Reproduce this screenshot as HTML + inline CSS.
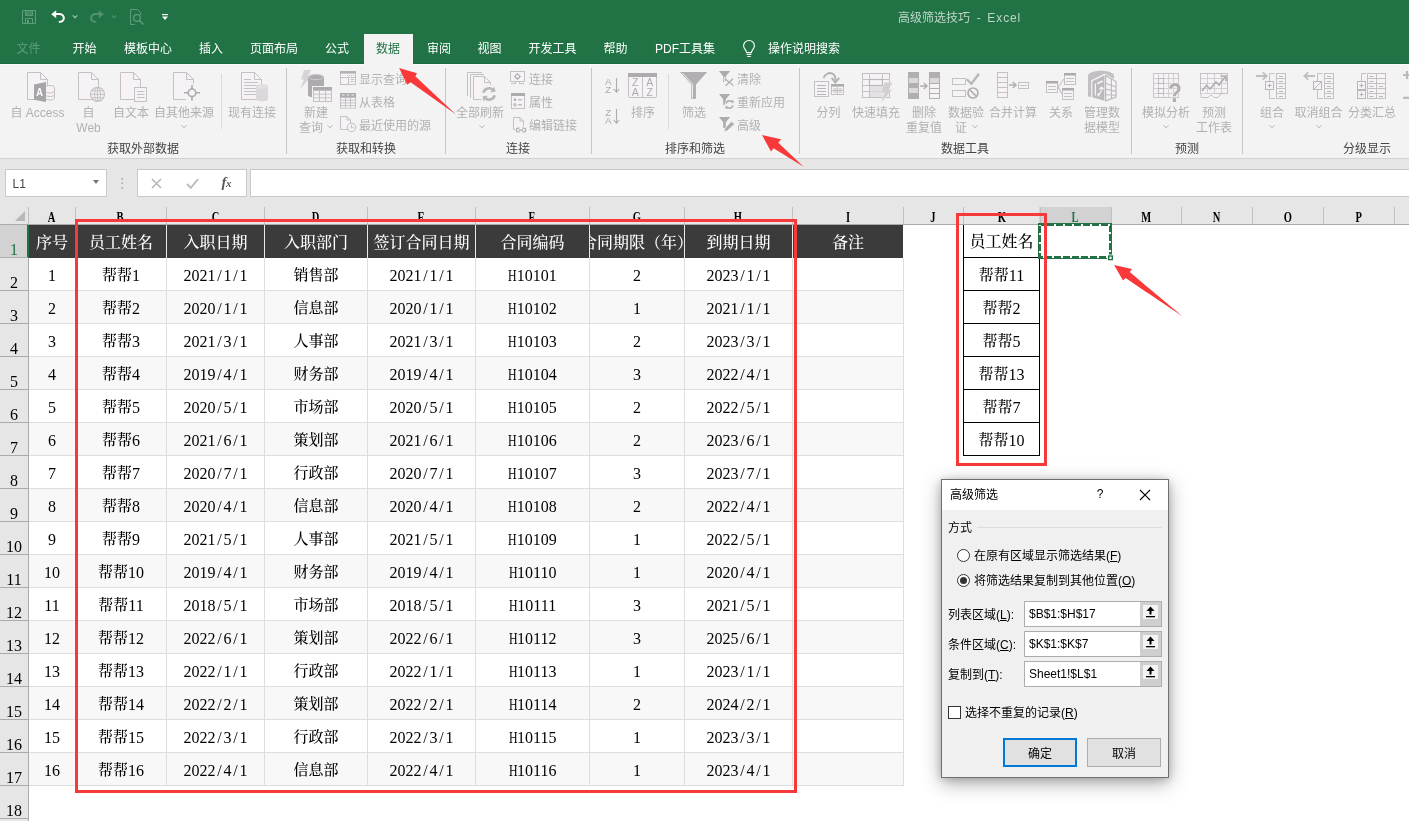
<!DOCTYPE html><html lang="zh-CN"><head><meta charset="utf-8"><title>高级筛选技巧 - Excel</title><style>
*{box-sizing:border-box;margin:0;padding:0}
html,body{width:1409px;height:821px;overflow:hidden;background:#fff}
body{position:relative;font-family:"Liberation Sans","Noto Sans CJK SC",sans-serif;font-size:12px;color:#444}
#root{position:absolute;left:0;top:0;width:1409px;height:821px;overflow:hidden;will-change:transform}
.abs{position:absolute}
#green{left:0;top:0;width:1409px;height:64px;background:#217346}
.tab{position:absolute;top:40px;height:18px;line-height:18px;font-size:12px;color:#fff;white-space:nowrap}
#ribbon{left:0;top:64px;width:1409px;height:94px;background:#f3f3f3}
#ribline{left:0;top:158px;width:1409px;height:1px;background:#d2d2d2}
#fbar{left:0;top:159px;width:1409px;height:48px;background:#e6e6e6}
.lbl{position:absolute;font-size:12px;line-height:15px;color:#b1b1b1;text-align:center;white-space:nowrap;transform:translateX(-50%)}
.sl{position:absolute;font-size:12px;line-height:16px;color:#b1b1b1;white-space:nowrap}
.gl{position:absolute;top:141px;font-size:12px;line-height:16px;color:#444;white-space:nowrap;transform:translateX(-50%)}
.gsep{position:absolute;top:68px;width:1px;height:86px;background:#c6c6c6}
.isep{position:absolute;top:74px;width:1px;height:55px;background:#dadada}
.ico{position:absolute}
.cell{position:absolute;font-weight:500;display:flex;justify-content:center;font-family:"Liberation Serif","Noto Serif CJK SC",serif;font-size:15px;color:#000;text-align:center;white-space:nowrap;overflow:hidden}
.in{flex:none;white-space:nowrap}
.m{font-family:"Liberation Serif",serif;font-size:16px;letter-spacing:0;position:relative;top:1px}
.hh{display:inline-block;width:8.5px;transform:scaleX(.74);transform-origin:0 50%}
.s{display:inline-block;width:8px;text-align:center;letter-spacing:0}
.hd{color:#fff;font-size:16px}
.ch{position:absolute;top:207px;height:17px;font-family:"Liberation Serif","Noto Serif CJK SC",serif;font-size:15px;color:#000;text-align:center;line-height:21px;overflow:hidden}
.rh{position:absolute;left:0;width:28px;font-family:"Liberation Serif","Noto Serif CJK SC",serif;font-size:16px;color:#000;text-align:center}
.dlg{font-family:"Liberation Sans","Noto Sans CJK SC",sans-serif;font-size:12px;color:#000}
u{text-decoration:underline}
</style></head><body><div id="root">
<div class="abs" id="green"></div>
<div class="abs" style="left:364px;top:34px;width:49px;height:30px;background:#f3f3f3"></div>
<div class="abs" style="left:898px;top:10px;height:16px;line-height:16px;font-size:12px;color:#bdd6c8;white-space:pre">高级筛选技巧  -  <span style="letter-spacing:.9px">Excel</span></div>
<div class="tab" style="left:16.5px;color:#5f9c7b">文件</div>
<div class="tab" style="left:72.5px;color:#fff">开始</div>
<div class="tab" style="left:124px;color:#fff">模板中心</div>
<div class="tab" style="left:199px;color:#fff">插入</div>
<div class="tab" style="left:250px;color:#fff">页面布局</div>
<div class="tab" style="left:325px;color:#fff">公式</div>
<div class="tab" style="left:376px;color:#217346">数据</div>
<div class="tab" style="left:427px;color:#fff">审阅</div>
<div class="tab" style="left:477.5px;color:#fff">视图</div>
<div class="tab" style="left:528.5px;color:#fff">开发工具</div>
<div class="tab" style="left:603.5px;color:#fff">帮助</div>
<div class="tab" style="left:655px;color:#fff">PDF工具集</div>
<div class="tab" style="left:768px;color:#fff">操作说明搜索</div>
<div class="abs" style="left:0;top:63px;width:1409px;height:1px;background:#1c6a3f"></div>
<div class="abs" id="ribbon"></div><div class="abs" style="left:0;top:64px;width:1409px;height:1px;background:#fbfafb"></div><div class="abs" style="left:364px;top:63px;width:49px;height:2px;background:#f3f3f3"></div><div class="abs" id="ribline"></div><div class="abs" id="fbar"></div>
<div class="lbl" style="left:37.5px;top:106px">自 Access</div>
<div class="lbl" style="left:88.5px;top:106px">自<br>Web</div>
<div class="lbl" style="left:131px;top:106px">自文本</div>
<div class="lbl" style="left:184px;top:106px">自其他来源</div>
<div class="lbl" style="left:252px;top:106px">现有连接</div>
<div class="lbl" style="left:316px;top:106px">新建<br>查询&nbsp;&nbsp;&nbsp;</div>
<div class="lbl" style="left:480px;top:106px">全部刷新</div>
<div class="lbl" style="left:643px;top:106px">排序</div>
<div class="lbl" style="left:694px;top:106px">筛选</div>
<div class="lbl" style="left:828.5px;top:106px">分列</div>
<div class="lbl" style="left:876px;top:106px">快速填充</div>
<div class="lbl" style="left:924px;top:106px">删除<br>重复值</div>
<div class="lbl" style="left:966px;top:106px">数据验<br>证&nbsp;&nbsp;&nbsp;</div>
<div class="lbl" style="left:1013px;top:106px">合并计算</div>
<div class="lbl" style="left:1061px;top:106px">关系</div>
<div class="lbl" style="left:1102px;top:106px">管理数<br>据模型</div>
<div class="lbl" style="left:1166px;top:106px">模拟分析</div>
<div class="lbl" style="left:1214px;top:106px">预测<br>工作表</div>
<div class="lbl" style="left:1272px;top:106px">组合</div>
<div class="lbl" style="left:1318.5px;top:106px">取消组合</div>
<div class="lbl" style="left:1372px;top:106px">分类汇总</div>
<div class="sl" style="left:359px;top:72px">显示查询</div>
<div class="sl" style="left:359px;top:95px">从表格</div>
<div class="sl" style="left:359px;top:118px">最近使用的源</div>
<div class="sl" style="left:529px;top:72px">连接</div>
<div class="sl" style="left:529px;top:95px">属性</div>
<div class="sl" style="left:529px;top:118px">编辑链接</div>
<div class="sl" style="left:737px;top:72px">清除</div>
<div class="sl" style="left:737px;top:95px">重新应用</div>
<div class="sl" style="left:737px;top:118px">高级</div>
<div class="gl" style="left:143px">获取外部数据</div>
<div class="gl" style="left:366px">获取和转换</div>
<div class="gl" style="left:518px">连接</div>
<div class="gl" style="left:695px">排序和筛选</div>
<div class="gl" style="left:965px">数据工具</div>
<div class="gl" style="left:1187px">预测</div>
<div class="gl" style="left:1367px">分级显示</div>
<div class="gsep" style="left:286px"></div>
<div class="gsep" style="left:445px"></div>
<div class="gsep" style="left:591px"></div>
<div class="gsep" style="left:799px"></div>
<div class="gsep" style="left:1131px"></div>
<div class="gsep" style="left:1242px"></div>
<div class="isep" style="left:221px"></div>
<div class="isep" style="left:668px"></div>
<svg class="abs" style="left:22px;top:10px;overflow:visible" width="14" height="14" viewBox="0 0 14 14"><path d="M.5 .5H13.5V13.5H.5Z" fill="none" stroke="#5c9d7b"/><path d="M3.5 .5V5.5H10.5V.5" fill="#5c9d7b" fill-opacity=".55" stroke="#5c9d7b"/><path d="M3.5 13.5V8.5H10.5V13.5" fill="none" stroke="#5c9d7b"/><rect x="5" y="10" width="2" height="3" fill="#5c9d7b"/></svg>
<svg class="abs" style="left:50px;top:9px;overflow:visible" width="16" height="15" viewBox="0 0 16 15"><path d="M1.2 5.2L6.2 1.2V3.9H9C12.6 3.9 14.8 6 14.8 9C14.8 12 12.6 13.8 9.5 13.8H8.8V12H9.4C11.5 12 12.8 10.9 12.8 9C12.8 7.1 11.5 5.9 9 5.9H6.2V9.2Z" fill="#fff"/></svg>
<svg class="abs" style="left:71px;top:13.5px" width="8" height="6"><path d="M1.7000000000000002 1.35L4 3.65L6.3 1.35" stroke="#a6cbb6" stroke-width="1.1" fill="none"/></svg>
<svg class="abs" style="left:89px;top:9px;overflow:visible" width="16" height="15" viewBox="0 0 16 15"><path d="M14.8 5.2L9.8 1.2V3.9H7C3.4 3.9 1.2 6 1.2 9C1.2 12 3.4 13.8 6.5 13.8H7.2V12H6.6C4.5 12 3.2 10.9 3.2 9C3.2 7.1 4.5 5.9 7 5.9H9.8V9.2Z" fill="#4f9370"/></svg>
<svg class="abs" style="left:110px;top:13.5px" width="8" height="6"><path d="M1.7000000000000002 1.35L4 3.65L6.3 1.35" stroke="#4f9370" stroke-width="1.1" fill="none"/></svg>
<svg class="abs" style="left:129px;top:8px;overflow:visible" width="16" height="18" viewBox="0 0 16 18"><path d="M1.5 16.5V1.5H8.5L11.5 4.5V7" fill="none" stroke="#5c9d7b"/><path d="M1.5 16.5H6" fill="none" stroke="#5c9d7b"/><circle cx="8" cy="10" r="3.3" fill="none" stroke="#5c9d7b" stroke-width="1.3"/><path d="M10.5 12.5L14.5 16.5" stroke="#5c9d7b" stroke-width="1.6"/></svg>
<svg class="abs" style="left:161px;top:13px;overflow:visible" width="8" height="8" viewBox="0 0 8 8"><rect x="1" y="1" width="6" height="1.2" fill="#fff"/><path d="M1 3.6H7L4 7Z" fill="#fff"/></svg>
<svg class="abs" style="left:741px;top:39px;overflow:visible" width="16" height="20" viewBox="0 0 16 20"><path d="M8 1.5C4.8 1.5 2.6 3.9 2.6 6.8C2.6 8.8 3.7 10 4.7 11.3C5.3 12.1 5.5 12.8 5.5 13.6H10.5C10.5 12.8 10.7 12.1 11.3 11.3C12.3 10 13.4 8.8 13.4 6.8C13.4 3.9 11.2 1.5 8 1.5Z" fill="none" stroke="#fff" stroke-width="1.1"/><path d="M5.7 15.5H10.3M6.2 17.5H9.8" stroke="#fff" stroke-width="1.1"/></svg>
<svg class="abs" style="left:26px;top:70px;overflow:visible" width="30" height="33" viewBox="0 0 30 33"><path d="M1.5 2.5H14.5L21.5 9.5V29.5H1.5Z" fill="#f6f2f6" stroke="#c4c1c4" stroke-width="1"/><path d="M14.5 2.5V9.5H21.5" fill="none" stroke="#c4c1c4" stroke-width="1"/><path d="M19 17.5V28C19 29.2 21.5 30 24 30C26.5 30 28.5 29.2 28.5 28V17.5C28.5 16.3 26.5 15.5 24 15.5C21.5 15.5 19 16.3 19 17.5Z" fill="#f6f2f6" stroke="#c4c1c4"/><path d="M19 21C19 22.2 21.5 23 24 23C26.5 23 28.5 22.2 28.5 21M19 24.5C19 25.7 21.5 26.5 24 26.5C26.5 26.5 28.5 25.7 28.5 24.5" fill="none" stroke="#c4c1c4"/><path d="M8 14.5L20 12V32L8 29.8Z" fill="#a7a5a7"/><text transform="translate(13.6,26.2) scale(.85,1)" font-family="Liberation Sans,sans-serif" font-weight="bold" font-size="11" fill="#fff" text-anchor="middle">A</text></svg>
<svg class="abs" style="left:77px;top:70px;overflow:visible" width="30" height="33" viewBox="0 0 30 33"><path d="M1.5 2.5H14.5L21.5 9.5V29.5H1.5Z" fill="#f6f2f6" stroke="#c4c1c4" stroke-width="1"/><path d="M14.5 2.5V9.5H21.5" fill="none" stroke="#c4c1c4" stroke-width="1"/><circle cx="20.5" cy="24.3" r="7" fill="#f6f2f6" stroke="#c4c1c4" stroke-width="1.2"/><ellipse cx="20.5" cy="24.3" rx="3" ry="7" fill="none" stroke="#c4c1c4"/><path d="M20.5 17.3V31.3M13.5 24.3H27.5M14.5 20.8H26.5M14.5 27.8H26.5" stroke="#c4c1c4" fill="none"/></svg>
<svg class="abs" style="left:119px;top:70px;overflow:visible" width="30" height="33" viewBox="0 0 30 33"><path d="M1.5 2.5H14.5L21.5 9.5V29.5H1.5Z" fill="#f6f2f6" stroke="#c4c1c4" stroke-width="1"/><path d="M14.5 2.5V9.5H21.5" fill="none" stroke="#c4c1c4" stroke-width="1"/><rect x="15.5" y="17.5" width="12" height="14" fill="#f6f2f6" stroke="#c4c1c4" stroke-width="1"/><path d="M18 21.5H25.5M18 24.5H25.5M18 27.5H25.5" stroke="#c4c1c4" fill="none"/></svg>
<svg class="abs" style="left:172px;top:70px;overflow:visible" width="30" height="33" viewBox="0 0 30 33"><path d="M1.5 2.5H14.5L21.5 9.5V29.5H1.5Z" fill="#f6f2f6" stroke="#c4c1c4" stroke-width="1"/><path d="M14.5 2.5V9.5H21.5" fill="none" stroke="#c4c1c4" stroke-width="1"/><rect x="14" y="14" width="13" height="18" fill="#f3f3f3"/><circle cx="20" cy="22.8" r="3.8" fill="#f6f2f6" stroke="#adabad" stroke-width="1.6"/><path d="M20 15V19M20 26.6V30.8M12 22.8H16.2M23.8 22.8H28" stroke="#adabad" stroke-width="1.6" fill="none"/></svg>
<svg class="abs" style="left:240px;top:70px;overflow:visible" width="30" height="33" viewBox="0 0 30 33"><path d="M1.5 2.5H14.5L21.5 9.5V29.5H1.5Z" fill="#f6f2f6" stroke="#c4c1c4" stroke-width="1"/><path d="M14.5 2.5V9.5H21.5" fill="none" stroke="#c4c1c4" stroke-width="1"/><path d="M4 9.5H11M4 12.5H18M4 15.5H18M4 18.5H18M4 21.5H18M4 24.5H18" stroke="#c4c1c4" fill="none"/><path d="M16 16.5V29C16 30.3 18.8 31.3 22 31.3C25.2 31.3 28 30.3 28 29V16.5C28 15.2 25.2 14.2 22 14.2C18.8 14.2 16 15.2 16 16.5Z" fill="#dbd7db"/><ellipse cx="22" cy="16.5" rx="6" ry="2.3" fill="#e3dfe3"/></svg>
<svg class="abs" style="left:299px;top:69px;overflow:visible" width="34" height="34" viewBox="0 0 34 34"><path d="M5 1H12L8.6 8H11.6L1.2 20L5 10.5H2Z" fill="#d6d2d6"/><path d="M9 8V26C9 27.6 12.6 28.8 17 28.8C21.4 28.8 25 27.6 25 26V8Z" fill="#adabad"/><ellipse cx="17" cy="8" rx="7.5" ry="2.6" fill="#adabad" stroke="#cfcccf" stroke-width="1"/><rect x="13" y="17" width="21" height="17" fill="#f3f3f3"/><rect x="14" y="18" width="19" height="15" fill="#c4c1c4"/><rect x="14" y="18" width="19" height="3" fill="#adabad"/><rect x="15" y="22.00" width="5" height="2.67" fill="#f6f2f6"/><rect x="15" y="25.67" width="5" height="2.67" fill="#f6f2f6"/><rect x="15" y="29.34" width="5" height="2.67" fill="#f6f2f6"/><rect x="21" y="22.00" width="5" height="2.67" fill="#f6f2f6"/><rect x="21" y="25.67" width="5" height="2.67" fill="#f6f2f6"/><rect x="21" y="29.34" width="5" height="2.67" fill="#f6f2f6"/><rect x="27" y="22.00" width="5" height="2.67" fill="#f6f2f6"/><rect x="27" y="25.67" width="5" height="2.67" fill="#f6f2f6"/><rect x="27" y="29.34" width="5" height="2.67" fill="#f6f2f6"/></svg>
<svg class="abs" style="left:340px;top:71px;overflow:visible" width="16" height="14" viewBox="0 0 16 14"><rect x="0.5" y="0.5" width="15" height="13" fill="#f6f2f6" stroke="#c4c1c4" stroke-width="1"/><rect x="0" y="0" width="16" height="2.6" fill="#b4b1b4"/><rect x="7" y="4" width="1" height="1" fill="#bdbabd"/><rect x="9" y="4" width="1" height="1" fill="#bdbabd"/><rect x="11" y="4" width="1" height="1" fill="#bdbabd"/><rect x="13" y="4" width="1" height="1" fill="#bdbabd"/><path d="M1 6.5H15" stroke="#c4c1c4" stroke-width="1" fill="none"/><path d="M8.5 7V13" stroke="#c4c1c4" stroke-width="1" fill="none"/><path d="M10.5 8.5H14M10.5 10.5H14" stroke="#c4c1c4" fill="none"/></svg>
<svg class="abs" style="left:340px;top:93px;overflow:visible" width="16" height="16" viewBox="0 0 16 16"><rect x="0" y="0" width="16" height="15.6" fill="#c4c1c4"/><rect x="0" y="0" width="16" height="4" fill="#adabad"/><rect x="1" y="5.00" width="4" height="1.8" fill="#f6f2f6"/><rect x="1" y="7.70" width="4" height="1.8" fill="#f6f2f6"/><rect x="1" y="10.40" width="4" height="1.8" fill="#f6f2f6"/><rect x="1" y="13.10" width="4" height="1.8" fill="#f6f2f6"/><rect x="6" y="5.00" width="4" height="1.8" fill="#f6f2f6"/><rect x="6" y="7.70" width="4" height="1.8" fill="#f6f2f6"/><rect x="6" y="10.40" width="4" height="1.8" fill="#f6f2f6"/><rect x="6" y="13.10" width="4" height="1.8" fill="#f6f2f6"/><rect x="11" y="5.00" width="4" height="1.8" fill="#f6f2f6"/><rect x="11" y="7.70" width="4" height="1.8" fill="#f6f2f6"/><rect x="11" y="10.40" width="4" height="1.8" fill="#f6f2f6"/><rect x="11" y="13.10" width="4" height="1.8" fill="#f6f2f6"/><path d="M2 2H4.5M6.8 2H9.3M11.5 2H14" stroke="#f6f2f6" stroke-width="1.2" fill="none"/></svg>
<svg class="abs" style="left:340px;top:116px;overflow:visible" width="18" height="18" viewBox="0 0 18 18"><path d="M0.5 0.5H7.0L10.5 4.0V13.5H0.5Z" fill="#f6f2f6" stroke="#c4c1c4" stroke-width="1"/><path d="M7.0 0.5V4.0H10.5" fill="none" stroke="#c4c1c4" stroke-width="1"/><circle cx="11.5" cy="11.5" r="4.2" fill="#f6f2f6" stroke="#c4c1c4" stroke-width="1.1"/><path d="M11.5 9V11.7H13.8" stroke="#c4c1c4" stroke-width="1.1" fill="none"/></svg>
<svg class="abs" style="left:326px;top:123.5px" width="8" height="6"><path d="M1.5 1.25L4 3.75L6.5 1.25" stroke="#b1b1b1" stroke-width="1" fill="none"/></svg>
<svg class="abs" style="left:466px;top:70px;overflow:visible" width="32" height="33" viewBox="0 0 32 33"><path d="M1.5 26V2.5H16" fill="none" stroke="#c4c1c4"/><path d="M4.5 28V4.5H18" fill="none" stroke="#c4c1c4"/><path d="M7.5 6.5H18.5L24.5 12.5V29.5H7.5Z" fill="#f6f2f6" stroke="#c4c1c4" stroke-width="1"/><path d="M18.5 6.5V12.5H24.5" fill="none" stroke="#c4c1c4" stroke-width="1"/><circle cx="23" cy="24" r="9.2" fill="#f3f3f3"/><path d="M17.42 22.81A5.7 5.7 0 0 1 26.27 19.33" fill="none" stroke="#b9b6b9" stroke-width="2.7"/><path d="M28.28 16.46L29.55 21.63L24.26 22.20Z" fill="#b9b6b9"/><path d="M28.58 25.19A5.7 5.7 0 0 1 19.73 28.67" fill="none" stroke="#b9b6b9" stroke-width="2.7"/><path d="M17.72 31.54L16.45 26.37L21.74 25.80Z" fill="#b9b6b9"/></svg>
<svg class="abs" style="left:478px;top:123.5px" width="8" height="6"><path d="M1.5 1.25L4 3.75L6.5 1.25" stroke="#b1b1b1" stroke-width="1" fill="none"/></svg>
<svg class="abs" style="left:510px;top:71px;overflow:visible" width="16" height="14" viewBox="0 0 16 14"><rect x="0.5" y="0.5" width="14" height="10" fill="#f6f2f6" stroke="#c4c1c4" stroke-width="1"/><path d="M1 12.5H6M9 12.5H14" stroke="#c4c1c4" fill="none"/><path d="M5.5 11V12.5M9.5 11V12.5" stroke="#c4c1c4" fill="none"/><circle cx="7.5" cy="5.5" r="2" fill="none" stroke="#adabad" stroke-width="1.1"/><path d="M7.5 2V3.5M7.5 7.5V9M4 5.5H5.5M9.5 5.5H11" stroke="#adabad" stroke-width="1.1"/></svg>
<svg class="abs" style="left:511px;top:93px;overflow:visible" width="14" height="16" viewBox="0 0 14 16"><rect x="0.5" y="0.5" width="13" height="15" fill="#f6f2f6" stroke="#c4c1c4" stroke-width="1"/><rect x="0" y="0" width="14" height="3" fill="#adabad"/><circle cx="4" cy="6.8" r="1.3" fill="#adabad"/><path d="M7 6.8H11" stroke="#adabad" stroke-width="1.1"/><circle cx="4" cy="11.8" r="1.2" fill="none" stroke="#adabad"/><path d="M7 11.8H11" stroke="#adabad" stroke-width="1.1"/></svg>
<svg class="abs" style="left:513px;top:117px;overflow:visible" width="14" height="16" viewBox="0 0 14 16"><path d="M0.5 0.5H7.0L10.5 4.0V12.5H0.5Z" fill="#f6f2f6" stroke="#c4c1c4" stroke-width="1"/><path d="M7.0 0.5V4.0H10.5" fill="none" stroke="#c4c1c4" stroke-width="1"/><rect x="2" y="9" width="12" height="6.5" fill="#f3f3f3"/><path d="M6.5 11.2H5.2A1.9 1.9 0 0 0 5.2 15H6.8M9.2 11.2H10.8A1.9 1.9 0 0 1 10.8 15H9.2M5.8 13.1H10.2" fill="none" stroke="#adabad" stroke-width="1.2"/></svg>
<svg class="abs" style="left:604.7px;top:77px;overflow:visible" width="16" height="17" viewBox="0 0 16 17"><text x="0" y="8" font-family="Liberation Sans,sans-serif" font-size="9.8" fill="#adabad">A</text><text x="0.3" y="16" font-family="Liberation Sans,sans-serif" font-size="9.8" fill="#adabad">Z</text><path d="M11.5 1V15M8.8 12L11.5 15.2L14.2 12" stroke="#adabad" stroke-width="1.1" fill="none"/></svg>
<svg class="abs" style="left:604.7px;top:108px;overflow:visible" width="16" height="17" viewBox="0 0 16 17"><text x="0.3" y="8" font-family="Liberation Sans,sans-serif" font-size="9.8" fill="#adabad">Z</text><text x="0" y="16" font-family="Liberation Sans,sans-serif" font-size="9.8" fill="#adabad">A</text><path d="M11.5 1V15M8.8 12L11.5 15.2L14.2 12" stroke="#adabad" stroke-width="1.1" fill="none"/></svg>
<svg class="abs" style="left:628px;top:73px;overflow:visible" width="29" height="25" viewBox="0 0 29 25"><rect x=".5" y=".5" width="28" height="24" rx="1" fill="#f6f2f6" stroke="#c4c1c4"/><rect x="0" y="0" width="29" height="4" fill="#adabad"/><path d="M14.5 4V25" stroke="#c4c1c4" stroke-width="1" fill="none"/><text x="7.3" y="13" font-family="Liberation Sans,sans-serif" font-size="10.5" fill="#adabad" text-anchor="middle">Z</text><text x="7.3" y="23" font-family="Liberation Sans,sans-serif" font-size="10.5" fill="#adabad" text-anchor="middle">A</text><text x="21.7" y="13" font-family="Liberation Sans,sans-serif" font-size="10.5" fill="#adabad" text-anchor="middle">A</text><text x="21.7" y="23" font-family="Liberation Sans,sans-serif" font-size="10.5" fill="#adabad" text-anchor="middle">Z</text></svg>
<svg class="abs" style="left:680px;top:72px;overflow:visible" width="28" height="27" viewBox="0 0 28 27"><path d="M0 0H27.2L16 12.5V26.8H11.2V12.5Z" fill="#b1afb1"/><path d="M2.6 1.2L12.4 12.2V25.6" fill="none" stroke="#f3f3f3" stroke-width="1"/></svg>
<svg class="abs" style="left:719px;top:71px;overflow:visible" width="16" height="16" viewBox="0 0 16 16"><path d="M0 0H11.2L6.8 5.2V11H4.2V5.2Z" fill="#adabad"/><rect x="5.6" y="6" width="10" height="10" fill="none"/><path d="M6.5 8.2L14.5 14.6M14 7.8L6.6 14.8" stroke="#adabad" stroke-width="1.2"/><path d="M5.4 5.8V10.4H8" stroke="#f3f3f3" stroke-width="1" fill="none"/></svg>
<svg class="abs" style="left:719px;top:94px;overflow:visible" width="16" height="16" viewBox="0 0 16 16"><path d="M0 0H11.2L6.8 5.2V11H4.2V5.2Z" fill="#adabad"/><circle cx="10.5" cy="10.5" r="5" fill="#f3f3f3"/><path d="M7 9.6A3.6 3.6 0 0 1 13.4 8.3" fill="none" stroke="#b4b1b4" stroke-width="1.7"/><path d="M12 6L15 6.8L14 10Z" fill="#b4b1b4"/><path d="M14 11.4A3.6 3.6 0 0 1 7.6 12.7" fill="none" stroke="#b4b1b4" stroke-width="1.7"/><path d="M9 15L6 14.2L7 11Z" fill="#b4b1b4"/></svg>
<svg class="abs" style="left:719px;top:117px;overflow:visible" width="16" height="16" viewBox="0 0 16 16"><path d="M0 0H11.2L6.8 5.2V11H4.2V5.2Z" fill="#adabad"/><path d="M12.6 4.2L15.6 7.2L8.6 13.6L4.8 15.2L6 11Z" fill="#adabad" stroke="#f3f3f3" stroke-width=".9"/></svg>
<svg class="abs" style="left:814px;top:71px;overflow:visible" width="31" height="27" viewBox="0 0 31 27"><rect x="0.5" y="10.5" width="14" height="15" fill="#f6f2f6" stroke="#c4c1c4" stroke-width="1"/><path d="M3 14.5H12M3 17.5H12M3 20.5H12M3 23.5H12" stroke="#b9b6b9" fill="none"/><rect x="17.5" y="13.5" width="12" height="10" fill="#f6f2f6" stroke="#c4c1c4" stroke-width="1"/><rect x="17" y="13" width="13" height="2.6" fill="#adabad"/><path d="M19.5 18H22.5M24.8 18H27.8M19.5 21H22.5M24.8 21H27.8" stroke="#b9b6b9" stroke-width="1" fill="none"/><path d="M23.5 16V23" stroke="#c4c1c4" stroke-width="1" fill="none"/><path d="M18 19.5H29" stroke="#c4c1c4" stroke-width="1" fill="none"/><path d="M9.5 7C11 3 15 1 18.5 2.6C21 3.8 21.6 6.5 21.4 9.5" fill="none" stroke="#b1afb1" stroke-width="1.8"/><path d="M17.6 6.8L21.2 11.6L25.2 6.8" fill="none" stroke="#b1afb1" stroke-width="1.8"/></svg>
<svg class="abs" style="left:862px;top:73px;overflow:visible" width="31" height="30" viewBox="0 0 31 30"><rect x="0.5" y="0.5" width="27" height="24" fill="#f6f2f6" stroke="#c4c1c4" stroke-width="1"/><path d="M7.5 1V24M20.5 1V7M1 6.5H27M1 12.5H7M1 18.5H27M7.5 12.5" stroke="#c4c1c4" fill="none"/><rect x="8" y="13" width="13" height="5.5" fill="#e4e0e4"/><rect x="8" y="19" width="13" height="5" fill="#e4e0e4"/><rect x="7.5" y="6.5" width="13" height="6" fill="#f6f2f6" stroke="#bcb9bc" stroke-width="1.2"/><path d="M22.6 9.6H30.4L26.8 16.8H30L19.2 29.6L22.6 19.8H19Z" fill="#d3cfd3" stroke="#f3f3f3" stroke-width="1" paint-order="stroke"/></svg>
<svg class="abs" style="left:908px;top:72px;overflow:visible" width="32" height="27" viewBox="0 0 32 27"><rect x="0" y="0" width="11" height="27" fill="#b1afb1"/><rect x="1" y="6" width="9" height="5" fill="#dcd8dc"/><rect x="1" y="16" width="9" height="5" fill="#dcd8dc"/><rect x="21" y="0" width="11" height="27" fill="#b1afb1"/><rect x="22" y="6" width="9" height="5" fill="#dcd8dc"/><rect x="22" y="12" width="9" height="4" fill="#f6f2f6"/><rect x="22" y="17" width="9" height="4" fill="#f6f2f6"/><rect x="22" y="22" width="9" height="4" fill="#f6f2f6"/><path d="M12.2 14H18.5M15.8 11L19 14L15.8 17" fill="none" stroke="#b1afb1" stroke-width="1.5"/></svg>
<svg class="abs" style="left:952px;top:72px;overflow:visible" width="29" height="27" viewBox="0 0 29 27"><rect x="0.5" y="6.5" width="13" height="6" fill="#f6f2f6" stroke="#c4c1c4" stroke-width="1"/><rect x="0.5" y="18.5" width="13" height="6" fill="#f6f2f6" stroke="#c4c1c4" stroke-width="1"/><path d="M14.8 7.2L19.4 11.8L27 1.8" fill="none" stroke="#b9b6b9" stroke-width="2.3"/><circle cx="21" cy="21" r="5" fill="#f3f3f3" stroke="#b1afb1" stroke-width="1.7"/><path d="M17.5 17.5L24.5 24.5" stroke="#b1afb1" stroke-width="1.7"/></svg>
<svg class="abs" style="left:971px;top:123.5px" width="8" height="6"><path d="M1.5 1.25L4 3.75L6.5 1.25" stroke="#b1b1b1" stroke-width="1" fill="none"/></svg>
<svg class="abs" style="left:997px;top:72px;overflow:visible" width="33" height="26" viewBox="0 0 33 26"><rect x="0.5" y="0.5" width="10" height="5" fill="#f6f2f6" stroke="#c4c1c4" stroke-width="1"/><rect x="0.5" y="5.5" width="10" height="5" fill="#f6f2f6" stroke="#c4c1c4" stroke-width="1"/><rect x="0.5" y="10.5" width="10" height="5" fill="#f6f2f6" stroke="#c4c1c4" stroke-width="1"/><rect x="0.5" y="15.5" width="10" height="5" fill="#f6f2f6" stroke="#c4c1c4" stroke-width="1"/><rect x="0.5" y="20.5" width="10" height="5" fill="#f6f2f6" stroke="#c4c1c4" stroke-width="1"/><path d="M12 13H18.5M15.8 10L19 13L15.8 16" fill="none" stroke="#b1afb1" stroke-width="1.5"/><rect x="21.5" y="10.5" width="10" height="6" fill="#f6f2f6" stroke="#c4c1c4" stroke-width="1"/><path d="M23 13.5H30" stroke="#c4c1c4" stroke-width="1" fill="none"/></svg>
<svg class="abs" style="left:1046px;top:73px;overflow:visible" width="31" height="28" viewBox="0 0 31 28"><path d="M12 14L18 6M12 14L16 21" stroke="#b9b6b9" fill="none"/><rect x="0.5" y="8.5" width="11" height="11" fill="#f6f2f6" stroke="#c4c1c4" stroke-width="1"/><rect x="0" y="8" width="12" height="2.5" fill="#adabad"/><path d="M2 13.5H10" stroke="#c4c1c4" stroke-width="1" fill="none"/><path d="M2 16.5H10" stroke="#c4c1c4" stroke-width="1" fill="none"/><rect x="18.5" y="0.5" width="11" height="11" fill="#f6f2f6" stroke="#c4c1c4" stroke-width="1"/><rect x="18" y="0" width="12" height="2.5" fill="#adabad"/><path d="M20 5.5H28" stroke="#c4c1c4" stroke-width="1" fill="none"/><path d="M20 8.5H28" stroke="#c4c1c4" stroke-width="1" fill="none"/><rect x="16.5" y="15.5" width="11" height="11" fill="#f6f2f6" stroke="#c4c1c4" stroke-width="1"/><rect x="16" y="15" width="12" height="2.5" fill="#adabad"/><path d="M18 20.5H26" stroke="#c4c1c4" stroke-width="1" fill="none"/><path d="M18 23.5H26" stroke="#c4c1c4" stroke-width="1" fill="none"/></svg>
<svg class="abs" style="left:1088px;top:70px;overflow:visible" width="30" height="33" viewBox="0 0 30 33"><path d="M0 6C0 2.9 5.8 .8 13 .8S26 2.9 26 6V22L13 28L0 26.4Z" fill="#c3c0c3"/><path d="M16.9 3.6L3.2 10.3V28.3L16.9 32.4L29.2 28V10.8Z" fill="#f3f3f3"/><path d="M4.4 11.2L16.4 5.4V30.8L4.4 27.3Z" fill="#bcb9bc"/><path d="M17.6 5.4L28 11.6V27L17.6 30.8Z" fill="#f6f2f6" stroke="#bcb9bc" stroke-width="1.2"/><path d="M17.6 13.2L28 17M17.6 19L28 21.4M17.6 24.8L28 25.2M23.4 9V28.6" stroke="#bcb9bc" stroke-width="1.1" fill="none"/><path d="M7.4 13.4V25.6" stroke="#f6f2f6" stroke-width="1.3" fill="none"/><path d="M9.2 13.6L14.8 11" stroke="#f6f2f6" stroke-width="1.9" fill="none"/><path d="M9.8 24.6C13 24.4 13.6 21.5 13.5 17.2M11.4 19.4L13.5 16.8L15.6 19.4M11.4 22.8L9.6 24.7L11.6 26.3" stroke="#f6f2f6" stroke-width="1.1" fill="none"/></svg>
<svg class="abs" style="left:1153px;top:73px;overflow:visible" width="29" height="30" viewBox="0 0 29 30"><rect x="0.5" y="0.5" width="25" height="24" fill="#f6f2f6" stroke="#c9c6c9" stroke-width="1"/><path d="M5.5 1V24M10.5 1V24M15.5 1V24M20.5 1V24M1 5.5H25M1 10.5H25M1 15.5H25M1 20.5H25" stroke="#d2cfd2" fill="none"/><rect x="5.5" y="5.5" width="5" height="5" fill="#f6f2f6" stroke="#bcb9bc"/><rect x="5.5" y="15.5" width="5" height="5" fill="#f6f2f6" stroke="#bcb9bc"/><rect x="14" y="6" width="15" height="24" fill="#f3f3f3" opacity=".0"/><text transform="translate(21.8,28.6) scale(.84,1)" font-family="Liberation Sans,sans-serif" font-size="27" font-weight="bold" fill="#b1afb1" text-anchor="middle" stroke="#f3f3f3" stroke-width="1.2" paint-order="stroke">?</text></svg>
<svg class="abs" style="left:1162px;top:123.5px" width="8" height="6"><path d="M1.5 1.25L4 3.75L6.5 1.25" stroke="#b1b1b1" stroke-width="1" fill="none"/></svg>
<svg class="abs" style="left:1200px;top:73px;overflow:visible" width="28" height="25" viewBox="0 0 28 25"><rect x="0.5" y="0.5" width="27" height="20" fill="#f6f2f6" stroke="#c4c1c4" stroke-width="1"/><path d="M7.5 1V20M14.5 1V20M21.5 1V20M1 5.5H27M1 10.5H27M1 15.5H27" stroke="#d2cfd2" fill="none"/><path d="M1 20.5V24.5H8L10 22.5H12L14 24.5H18L21 21" stroke="#c4c1c4" fill="#f6f2f6"/><path d="M2 18L6.5 12.5L10 16L16 9L19 12L25 4" fill="none" stroke="#b1afb1" stroke-width="1.7"/><path d="M20.5 3H26V8.5" fill="none" stroke="#b1afb1" stroke-width="1.7"/></svg>
<svg class="abs" style="left:1256px;top:73px;overflow:visible" width="31" height="26" viewBox="0 0 31 26"><rect x="20.5" y=".5" width="9" height="25" fill="#f6f2f6" stroke="#c4c1c4"/><path d="M20 5.5H30" stroke="#c4c1c4" stroke-width="1" fill="none"/><path d="M20 10.5H30" stroke="#c4c1c4" stroke-width="1" fill="none"/><path d="M20 15.5H30" stroke="#c4c1c4" stroke-width="1" fill="none"/><path d="M20 20.5H30" stroke="#c4c1c4" stroke-width="1" fill="none"/><path d="M23 3.5H27" stroke="#b9b6b9" fill="none"/><path d="M23 8.5H27" stroke="#b9b6b9" fill="none"/><path d="M23 13.5H27" stroke="#b9b6b9" fill="none"/><path d="M23 18.5H27" stroke="#b9b6b9" fill="none"/><path d="M23 23.5H27" stroke="#b9b6b9" fill="none"/><path d="M18.8 .5H13.5V8M13.5 17V25.5H18.8" fill="none" stroke="#c4c1c4"/><rect x="9.5" y="8.5" width="8" height="8" fill="#f6f2f6" stroke="#b9b6b9"/><path d="M11.5 12.5H15.5M13.5 10.5V14.5" stroke="#b1afb1" fill="none"/><path d="M0 3H10.4M6.8 -.6L10.6 3L6.8 6.6" fill="none" stroke="#c1bec1" stroke-width="1.9"/></svg>
<svg class="abs" style="left:1268px;top:123.5px" width="8" height="6"><path d="M1.5 1.25L4 3.75L6.5 1.25" stroke="#b1b1b1" stroke-width="1" fill="none"/></svg>
<svg class="abs" style="left:1303px;top:73px;overflow:visible" width="31" height="26" viewBox="0 0 31 26"><rect x="21.5" y=".5" width="9" height="25" fill="#f6f2f6" stroke="#c4c1c4"/><path d="M21 5.5H31" stroke="#c4c1c4" stroke-width="1" fill="none"/><path d="M21 10.5H31" stroke="#c4c1c4" stroke-width="1" fill="none"/><path d="M21 15.5H31" stroke="#c4c1c4" stroke-width="1" fill="none"/><path d="M21 20.5H31" stroke="#c4c1c4" stroke-width="1" fill="none"/><path d="M24 3.5H28" stroke="#b9b6b9" fill="none"/><path d="M24 8.5H28" stroke="#b9b6b9" fill="none"/><path d="M24 13.5H28" stroke="#b9b6b9" fill="none"/><path d="M24 18.5H28" stroke="#b9b6b9" fill="none"/><path d="M24 23.5H28" stroke="#b9b6b9" fill="none"/><path d="M19.8 .5H14.5V8M14.5 17V25.5H19.8" fill="none" stroke="#c4c1c4"/><rect x="10.5" y="8.5" width="8" height="8" fill="#f6f2f6" stroke="#b9b6b9"/><path d="M11 16L18 9" stroke="#b9b6b9" fill="none"/><path d="M12 3H1.6M5.2 -.6L1.4 3L5.2 6.6" fill="none" stroke="#c1bec1" stroke-width="1.9"/></svg>
<svg class="abs" style="left:1314.5px;top:123.5px" width="8" height="6"><path d="M1.5 1.25L4 3.75L6.5 1.25" stroke="#b1b1b1" stroke-width="1" fill="none"/></svg>
<svg class="abs" style="left:1357px;top:73px;overflow:visible" width="30" height="26" viewBox="0 0 30 26"><path d="M9 .5H4.5V8" fill="none" stroke="#c4c1c4"/><rect x="10.5" y="0.5" width="18" height="25" fill="#f6f2f6" stroke="#c4c1c4" stroke-width="1"/><path d="M19.5 0V26" stroke="#c4c1c4" stroke-width="1" fill="none"/><path d="M10 5.5H29" stroke="#c4c1c4" stroke-width="1" fill="none"/><path d="M10 10.5H29" stroke="#c4c1c4" stroke-width="1" fill="none"/><path d="M10 15.5H29" stroke="#c4c1c4" stroke-width="1" fill="none"/><path d="M10 20.5H29" stroke="#c4c1c4" stroke-width="1" fill="none"/><path d="M12.5 3.5H16.5" stroke="#b9b6b9" fill="none"/><path d="M12.5 8.5H16.5" stroke="#b9b6b9" fill="none"/><path d="M12.5 13.5H16.5" stroke="#b9b6b9" fill="none"/><path d="M22 13.5H26" stroke="#b9b6b9" fill="none"/><path d="M12.5 18.5H16.5" stroke="#b9b6b9" fill="none"/><path d="M12.5 23.5H16.5" stroke="#b9b6b9" fill="none"/><path d="M22 23.5H26" stroke="#b9b6b9" fill="none"/><rect x=".5" y="8.5" width="8" height="8" fill="#f6f2f6" stroke="#b9b6b9"/><path d="M2.5 12.5H6.5M4.5 10.5V14.5" stroke="#b1afb1" fill="none"/><rect x=".5" y="17.5" width="8" height="8" fill="#f6f2f6" stroke="#b9b6b9"/><path d="M2.5 21.5H6.5M4.5 19.5V23.5" stroke="#b1afb1" fill="none"/></svg>
<svg class="abs" style="left:1403px;top:70px;overflow:visible" width="8" height="30" viewBox="0 0 8 30"><path d="M0 5H8M4 1V9" stroke="#bcb9bc" stroke-width="2.2" fill="none"/><path d="M0 27.8H8" stroke="#bcb9bc" stroke-width="2.2" fill="none"/></svg>
<svg class="abs" style="left:180px;top:123.5px" width="8" height="6"><path d="M1.5 1.25L4 3.75L6.5 1.25" stroke="#b1b1b1" stroke-width="1" fill="none"/></svg>
<div class="abs" style="left:5px;top:169px;width:102px;height:28px;background:#fff;border:1px solid #c8c8c8"></div>
<div class="abs" style="left:12.5px;top:176px;font-size:12px;line-height:16px;color:#444">L1</div>
<div class="abs" style="left:93px;top:180px;width:0;height:0;border-left:3.5px solid transparent;border-right:3.5px solid transparent;border-top:4.5px solid #777"></div>
<div class="abs" style="left:137px;top:169px;width:110px;height:28px;background:#fff;border:1px solid #c8c8c8"></div>
<div class="abs" style="left:250px;top:169px;width:1170px;height:28px;background:#fff;border:1px solid #c8c8c8"></div>
<svg class="abs" style="left:121px;top:178px;overflow:visible" width="3" height="11" viewBox="0 0 3 11"><rect x=".5" y="0" width="1.4" height="1.6" fill="#a0a0a0"/><rect x=".5" y="4.5" width="1.4" height="1.6" fill="#a0a0a0"/><rect x=".5" y="9" width="1.4" height="1.6" fill="#a0a0a0"/></svg>
<svg class="abs" style="left:151px;top:178px;overflow:visible" width="11" height="11" viewBox="0 0 11 11"><path d="M1 1L10 10M10 1L1 10" stroke="#b6b6b6" stroke-width="1.5" fill="none"/></svg>
<svg class="abs" style="left:186px;top:178px;overflow:visible" width="13" height="11" viewBox="0 0 13 11"><path d="M1 6L4.8 9.8L12 1.2" stroke="#bcbcbc" stroke-width="1.9" fill="none"/></svg>
<div class="abs" style="left:221.5px;top:172px;width:16px;font-family:'Liberation Serif',serif;font-style:italic;font-weight:bold;font-size:15px;line-height:20px;color:#5a5a5a;letter-spacing:-.5px;white-space:nowrap">f<span style="font-size:11px">x</span></div>
<div class="abs" style="left:0;top:207px;width:1409px;height:17px;background:#e6e6e6"></div>
<div class="abs" style="left:0;top:224px;width:1409px;height:1px;background:#ababab"></div>
<div class="abs" style="left:1039px;top:207px;width:72px;height:17px;background:#d2d2d2"></div>
<div class="ch" style="left:28px;width:47px;color:#000"><span style="display:inline-block;font-weight:bold;transform:scaleX(.7)">A</span></div>
<div class="ch" style="left:75px;width:91px;color:#000"><span style="display:inline-block;font-weight:bold;transform:scaleX(.7)">B</span></div>
<div class="ch" style="left:166px;width:98px;color:#000"><span style="display:inline-block;font-weight:bold;transform:scaleX(.7)">C</span></div>
<div class="ch" style="left:264px;width:103px;color:#000"><span style="display:inline-block;font-weight:bold;transform:scaleX(.7)">D</span></div>
<div class="ch" style="left:367px;width:108px;color:#000"><span style="display:inline-block;font-weight:bold;transform:scaleX(.7)">E</span></div>
<div class="ch" style="left:475px;width:114px;color:#000"><span style="display:inline-block;font-weight:bold;transform:scaleX(.7)">F</span></div>
<div class="ch" style="left:589px;width:95px;color:#000"><span style="display:inline-block;font-weight:bold;transform:scaleX(.7)">G</span></div>
<div class="ch" style="left:684px;width:108px;color:#000"><span style="display:inline-block;font-weight:bold;transform:scaleX(.7)">H</span></div>
<div class="ch" style="left:792px;width:111px;color:#000"><span style="display:inline-block;font-weight:bold;transform:scaleX(.7)">I</span></div>
<div class="ch" style="left:903px;width:60px;color:#000"><span style="display:inline-block;font-weight:bold;transform:scaleX(.7)">J</span></div>
<div class="ch" style="left:963px;width:77px;color:#000"><span style="display:inline-block;font-weight:bold;transform:scaleX(.7)">K</span></div>
<div class="ch" style="left:1040px;width:71px;color:#217346"><span style="display:inline-block;font-weight:bold;transform:scaleX(.7)">L</span></div>
<div class="ch" style="left:1111px;width:70px;color:#000"><span style="display:inline-block;font-weight:bold;transform:scaleX(.7)">M</span></div>
<div class="ch" style="left:1181px;width:71px;color:#000"><span style="display:inline-block;font-weight:bold;transform:scaleX(.7)">N</span></div>
<div class="ch" style="left:1252px;width:71px;color:#000"><span style="display:inline-block;font-weight:bold;transform:scaleX(.7)">O</span></div>
<div class="ch" style="left:1323px;width:71px;color:#000"><span style="display:inline-block;font-weight:bold;transform:scaleX(.7)">P</span></div>
<div class="ch" style="left:1394px;width:71px;color:#000"><span style="display:inline-block;font-weight:bold;transform:scaleX(.7)">Q</span></div>
<div class="abs" style="left:28px;top:207px;width:1px;height:17px;background:#c0c0c0"></div>
<div class="abs" style="left:75px;top:207px;width:1px;height:17px;background:#c0c0c0"></div>
<div class="abs" style="left:166px;top:207px;width:1px;height:17px;background:#c0c0c0"></div>
<div class="abs" style="left:264px;top:207px;width:1px;height:17px;background:#c0c0c0"></div>
<div class="abs" style="left:367px;top:207px;width:1px;height:17px;background:#c0c0c0"></div>
<div class="abs" style="left:475px;top:207px;width:1px;height:17px;background:#c0c0c0"></div>
<div class="abs" style="left:589px;top:207px;width:1px;height:17px;background:#c0c0c0"></div>
<div class="abs" style="left:684px;top:207px;width:1px;height:17px;background:#c0c0c0"></div>
<div class="abs" style="left:792px;top:207px;width:1px;height:17px;background:#c0c0c0"></div>
<div class="abs" style="left:903px;top:207px;width:1px;height:17px;background:#c0c0c0"></div>
<div class="abs" style="left:963px;top:207px;width:1px;height:17px;background:#c0c0c0"></div>
<div class="abs" style="left:1040px;top:207px;width:1px;height:17px;background:#c0c0c0"></div>
<div class="abs" style="left:1111px;top:207px;width:1px;height:17px;background:#c0c0c0"></div>
<div class="abs" style="left:1181px;top:207px;width:1px;height:17px;background:#c0c0c0"></div>
<div class="abs" style="left:1252px;top:207px;width:1px;height:17px;background:#c0c0c0"></div>
<div class="abs" style="left:1323px;top:207px;width:1px;height:17px;background:#c0c0c0"></div>
<div class="abs" style="left:1394px;top:207px;width:1px;height:17px;background:#c0c0c0"></div>
<div class="abs" style="left:1465px;top:207px;width:1px;height:17px;background:#c0c0c0"></div>
<svg class="abs" style="left:15px;top:211px" width="11" height="11"><path d="M10 0V10H0Z" fill="#b8b8b8"/></svg>
<div class="abs" style="left:0;top:225px;width:28px;height:596px;background:#e6e6e6"></div>
<div class="abs" style="left:0;top:225px;width:28px;height:33px;background:#d2d2d2"></div>
<div class="abs" style="left:28px;top:225px;width:1px;height:596px;background:#ababab"></div>
<div class="abs" style="left:27px;top:225px;width:2px;height:33px;background:#217346"></div>
<div class="rh" style="top:240px;height:18px;line-height:20px;color:#217346">1</div>
<div class="abs" style="left:0;top:257px;width:28px;height:1px;background:#ababab"></div>
<div class="rh" style="top:273px;height:18px;line-height:20px;color:#000">2</div>
<div class="abs" style="left:0;top:290px;width:28px;height:1px;background:#ababab"></div>
<div class="rh" style="top:306px;height:18px;line-height:20px;color:#000">3</div>
<div class="abs" style="left:0;top:323px;width:28px;height:1px;background:#ababab"></div>
<div class="rh" style="top:339px;height:18px;line-height:20px;color:#000">4</div>
<div class="abs" style="left:0;top:356px;width:28px;height:1px;background:#ababab"></div>
<div class="rh" style="top:372px;height:18px;line-height:20px;color:#000">5</div>
<div class="abs" style="left:0;top:389px;width:28px;height:1px;background:#ababab"></div>
<div class="rh" style="top:405px;height:18px;line-height:20px;color:#000">6</div>
<div class="abs" style="left:0;top:422px;width:28px;height:1px;background:#ababab"></div>
<div class="rh" style="top:438px;height:18px;line-height:20px;color:#000">7</div>
<div class="abs" style="left:0;top:455px;width:28px;height:1px;background:#ababab"></div>
<div class="rh" style="top:471px;height:18px;line-height:20px;color:#000">8</div>
<div class="abs" style="left:0;top:488px;width:28px;height:1px;background:#ababab"></div>
<div class="rh" style="top:504px;height:18px;line-height:20px;color:#000">9</div>
<div class="abs" style="left:0;top:521px;width:28px;height:1px;background:#ababab"></div>
<div class="rh" style="top:537px;height:18px;line-height:20px;color:#000">10</div>
<div class="abs" style="left:0;top:554px;width:28px;height:1px;background:#ababab"></div>
<div class="rh" style="top:570px;height:18px;line-height:20px;color:#000">11</div>
<div class="abs" style="left:0;top:587px;width:28px;height:1px;background:#ababab"></div>
<div class="rh" style="top:603px;height:18px;line-height:20px;color:#000">12</div>
<div class="abs" style="left:0;top:620px;width:28px;height:1px;background:#ababab"></div>
<div class="rh" style="top:636px;height:18px;line-height:20px;color:#000">13</div>
<div class="abs" style="left:0;top:653px;width:28px;height:1px;background:#ababab"></div>
<div class="rh" style="top:669px;height:18px;line-height:20px;color:#000">14</div>
<div class="abs" style="left:0;top:686px;width:28px;height:1px;background:#ababab"></div>
<div class="rh" style="top:702px;height:18px;line-height:20px;color:#000">15</div>
<div class="abs" style="left:0;top:719px;width:28px;height:1px;background:#ababab"></div>
<div class="rh" style="top:735px;height:18px;line-height:20px;color:#000">16</div>
<div class="abs" style="left:0;top:752px;width:28px;height:1px;background:#ababab"></div>
<div class="rh" style="top:768px;height:18px;line-height:20px;color:#000">17</div>
<div class="abs" style="left:0;top:785px;width:28px;height:1px;background:#ababab"></div>
<div class="rh" style="top:801px;height:18px;line-height:20px;color:#000">18</div>
<div class="abs" style="left:0;top:818px;width:28px;height:1px;background:#ababab"></div>
<div class="abs" style="left:29px;top:225px;width:874px;height:33px;background:#3b3b3b"></div>
<div class="cell hd" style="left:29px;top:225px;width:46px;height:32px;line-height:35px"><span class="in">序号</span></div>
<div class="cell hd" style="left:76px;top:225px;width:90px;height:32px;line-height:35px"><span class="in">员工姓名</span></div>
<div class="abs" style="left:75px;top:225px;width:1px;height:33px;background:#e8e8e8"></div>
<div class="cell hd" style="left:167px;top:225px;width:97px;height:32px;line-height:35px"><span class="in">入职日期</span></div>
<div class="abs" style="left:166px;top:225px;width:1px;height:33px;background:#e8e8e8"></div>
<div class="cell hd" style="left:265px;top:225px;width:102px;height:32px;line-height:35px"><span class="in">入职部门</span></div>
<div class="abs" style="left:264px;top:225px;width:1px;height:33px;background:#e8e8e8"></div>
<div class="cell hd" style="left:368px;top:225px;width:107px;height:32px;line-height:35px"><span class="in">签订合同日期</span></div>
<div class="abs" style="left:367px;top:225px;width:1px;height:33px;background:#e8e8e8"></div>
<div class="cell hd" style="left:476px;top:225px;width:113px;height:32px;line-height:35px"><span class="in">合同编码</span></div>
<div class="abs" style="left:475px;top:225px;width:1px;height:33px;background:#e8e8e8"></div>
<div class="cell hd" style="left:590px;top:225px;width:94px;height:32px;line-height:35px"><span class="in">合同期限（年）</span></div>
<div class="abs" style="left:589px;top:225px;width:1px;height:33px;background:#e8e8e8"></div>
<div class="cell hd" style="left:685px;top:225px;width:107px;height:32px;line-height:35px"><span class="in">到期日期</span></div>
<div class="abs" style="left:684px;top:225px;width:1px;height:33px;background:#e8e8e8"></div>
<div class="cell hd" style="left:793px;top:225px;width:110px;height:32px;line-height:35px"><span class="in">备注</span></div>
<div class="abs" style="left:792px;top:225px;width:1px;height:33px;background:#e8e8e8"></div>
<div class="abs" style="left:29px;top:258px;width:874px;height:33px;background:#fff"></div>
<div class="abs" style="left:29px;top:290px;width:875px;height:1px;background:#dedede"></div>
<div class="cell" style="left:29px;top:258px;width:46px;height:32px;line-height:34px"><span class="in"><span class="m">1</span></span></div>
<div class="cell" style="left:76px;top:258px;width:90px;height:32px;line-height:34px"><span class="in">帮帮<span class="m">1</span></span></div>
<div class="cell" style="left:167px;top:258px;width:97px;height:32px;line-height:34px"><span class="in"><span class="m">2021<span class="s">/</span>1<span class="s">/</span>1</span></span></div>
<div class="cell" style="left:265px;top:258px;width:102px;height:32px;line-height:34px"><span class="in">销售部</span></div>
<div class="cell" style="left:368px;top:258px;width:107px;height:32px;line-height:34px"><span class="in"><span class="m">2021<span class="s">/</span>1<span class="s">/</span>1</span></span></div>
<div class="cell" style="left:476px;top:258px;width:113px;height:32px;line-height:34px"><span class="in"><span class="m"><span class="hh">H</span>10101</span></span></div>
<div class="cell" style="left:590px;top:258px;width:94px;height:32px;line-height:34px"><span class="in"><span class="m">2</span></span></div>
<div class="cell" style="left:685px;top:258px;width:107px;height:32px;line-height:34px"><span class="in"><span class="m">2023<span class="s">/</span>1<span class="s">/</span>1</span></span></div>
<div class="abs" style="left:29px;top:291px;width:874px;height:33px;background:#f8f8f8"></div>
<div class="abs" style="left:29px;top:323px;width:875px;height:1px;background:#dedede"></div>
<div class="cell" style="left:29px;top:291px;width:46px;height:32px;line-height:34px"><span class="in"><span class="m">2</span></span></div>
<div class="cell" style="left:76px;top:291px;width:90px;height:32px;line-height:34px"><span class="in">帮帮<span class="m">2</span></span></div>
<div class="cell" style="left:167px;top:291px;width:97px;height:32px;line-height:34px"><span class="in"><span class="m">2020<span class="s">/</span>1<span class="s">/</span>1</span></span></div>
<div class="cell" style="left:265px;top:291px;width:102px;height:32px;line-height:34px"><span class="in">信息部</span></div>
<div class="cell" style="left:368px;top:291px;width:107px;height:32px;line-height:34px"><span class="in"><span class="m">2020<span class="s">/</span>1<span class="s">/</span>1</span></span></div>
<div class="cell" style="left:476px;top:291px;width:113px;height:32px;line-height:34px"><span class="in"><span class="m"><span class="hh">H</span>10102</span></span></div>
<div class="cell" style="left:590px;top:291px;width:94px;height:32px;line-height:34px"><span class="in"><span class="m">1</span></span></div>
<div class="cell" style="left:685px;top:291px;width:107px;height:32px;line-height:34px"><span class="in"><span class="m">2021<span class="s">/</span>1<span class="s">/</span>1</span></span></div>
<div class="abs" style="left:29px;top:324px;width:874px;height:33px;background:#fff"></div>
<div class="abs" style="left:29px;top:356px;width:875px;height:1px;background:#dedede"></div>
<div class="cell" style="left:29px;top:324px;width:46px;height:32px;line-height:34px"><span class="in"><span class="m">3</span></span></div>
<div class="cell" style="left:76px;top:324px;width:90px;height:32px;line-height:34px"><span class="in">帮帮<span class="m">3</span></span></div>
<div class="cell" style="left:167px;top:324px;width:97px;height:32px;line-height:34px"><span class="in"><span class="m">2021<span class="s">/</span>3<span class="s">/</span>1</span></span></div>
<div class="cell" style="left:265px;top:324px;width:102px;height:32px;line-height:34px"><span class="in">人事部</span></div>
<div class="cell" style="left:368px;top:324px;width:107px;height:32px;line-height:34px"><span class="in"><span class="m">2021<span class="s">/</span>3<span class="s">/</span>1</span></span></div>
<div class="cell" style="left:476px;top:324px;width:113px;height:32px;line-height:34px"><span class="in"><span class="m"><span class="hh">H</span>10103</span></span></div>
<div class="cell" style="left:590px;top:324px;width:94px;height:32px;line-height:34px"><span class="in"><span class="m">2</span></span></div>
<div class="cell" style="left:685px;top:324px;width:107px;height:32px;line-height:34px"><span class="in"><span class="m">2023<span class="s">/</span>3<span class="s">/</span>1</span></span></div>
<div class="abs" style="left:29px;top:357px;width:874px;height:33px;background:#f8f8f8"></div>
<div class="abs" style="left:29px;top:389px;width:875px;height:1px;background:#dedede"></div>
<div class="cell" style="left:29px;top:357px;width:46px;height:32px;line-height:34px"><span class="in"><span class="m">4</span></span></div>
<div class="cell" style="left:76px;top:357px;width:90px;height:32px;line-height:34px"><span class="in">帮帮<span class="m">4</span></span></div>
<div class="cell" style="left:167px;top:357px;width:97px;height:32px;line-height:34px"><span class="in"><span class="m">2019<span class="s">/</span>4<span class="s">/</span>1</span></span></div>
<div class="cell" style="left:265px;top:357px;width:102px;height:32px;line-height:34px"><span class="in">财务部</span></div>
<div class="cell" style="left:368px;top:357px;width:107px;height:32px;line-height:34px"><span class="in"><span class="m">2019<span class="s">/</span>4<span class="s">/</span>1</span></span></div>
<div class="cell" style="left:476px;top:357px;width:113px;height:32px;line-height:34px"><span class="in"><span class="m"><span class="hh">H</span>10104</span></span></div>
<div class="cell" style="left:590px;top:357px;width:94px;height:32px;line-height:34px"><span class="in"><span class="m">3</span></span></div>
<div class="cell" style="left:685px;top:357px;width:107px;height:32px;line-height:34px"><span class="in"><span class="m">2022<span class="s">/</span>4<span class="s">/</span>1</span></span></div>
<div class="abs" style="left:29px;top:390px;width:874px;height:33px;background:#fff"></div>
<div class="abs" style="left:29px;top:422px;width:875px;height:1px;background:#dedede"></div>
<div class="cell" style="left:29px;top:390px;width:46px;height:32px;line-height:34px"><span class="in"><span class="m">5</span></span></div>
<div class="cell" style="left:76px;top:390px;width:90px;height:32px;line-height:34px"><span class="in">帮帮<span class="m">5</span></span></div>
<div class="cell" style="left:167px;top:390px;width:97px;height:32px;line-height:34px"><span class="in"><span class="m">2020<span class="s">/</span>5<span class="s">/</span>1</span></span></div>
<div class="cell" style="left:265px;top:390px;width:102px;height:32px;line-height:34px"><span class="in">市场部</span></div>
<div class="cell" style="left:368px;top:390px;width:107px;height:32px;line-height:34px"><span class="in"><span class="m">2020<span class="s">/</span>5<span class="s">/</span>1</span></span></div>
<div class="cell" style="left:476px;top:390px;width:113px;height:32px;line-height:34px"><span class="in"><span class="m"><span class="hh">H</span>10105</span></span></div>
<div class="cell" style="left:590px;top:390px;width:94px;height:32px;line-height:34px"><span class="in"><span class="m">2</span></span></div>
<div class="cell" style="left:685px;top:390px;width:107px;height:32px;line-height:34px"><span class="in"><span class="m">2022<span class="s">/</span>5<span class="s">/</span>1</span></span></div>
<div class="abs" style="left:29px;top:423px;width:874px;height:33px;background:#f8f8f8"></div>
<div class="abs" style="left:29px;top:455px;width:875px;height:1px;background:#dedede"></div>
<div class="cell" style="left:29px;top:423px;width:46px;height:32px;line-height:34px"><span class="in"><span class="m">6</span></span></div>
<div class="cell" style="left:76px;top:423px;width:90px;height:32px;line-height:34px"><span class="in">帮帮<span class="m">6</span></span></div>
<div class="cell" style="left:167px;top:423px;width:97px;height:32px;line-height:34px"><span class="in"><span class="m">2021<span class="s">/</span>6<span class="s">/</span>1</span></span></div>
<div class="cell" style="left:265px;top:423px;width:102px;height:32px;line-height:34px"><span class="in">策划部</span></div>
<div class="cell" style="left:368px;top:423px;width:107px;height:32px;line-height:34px"><span class="in"><span class="m">2021<span class="s">/</span>6<span class="s">/</span>1</span></span></div>
<div class="cell" style="left:476px;top:423px;width:113px;height:32px;line-height:34px"><span class="in"><span class="m"><span class="hh">H</span>10106</span></span></div>
<div class="cell" style="left:590px;top:423px;width:94px;height:32px;line-height:34px"><span class="in"><span class="m">2</span></span></div>
<div class="cell" style="left:685px;top:423px;width:107px;height:32px;line-height:34px"><span class="in"><span class="m">2023<span class="s">/</span>6<span class="s">/</span>1</span></span></div>
<div class="abs" style="left:29px;top:456px;width:874px;height:33px;background:#fff"></div>
<div class="abs" style="left:29px;top:488px;width:875px;height:1px;background:#dedede"></div>
<div class="cell" style="left:29px;top:456px;width:46px;height:32px;line-height:34px"><span class="in"><span class="m">7</span></span></div>
<div class="cell" style="left:76px;top:456px;width:90px;height:32px;line-height:34px"><span class="in">帮帮<span class="m">7</span></span></div>
<div class="cell" style="left:167px;top:456px;width:97px;height:32px;line-height:34px"><span class="in"><span class="m">2020<span class="s">/</span>7<span class="s">/</span>1</span></span></div>
<div class="cell" style="left:265px;top:456px;width:102px;height:32px;line-height:34px"><span class="in">行政部</span></div>
<div class="cell" style="left:368px;top:456px;width:107px;height:32px;line-height:34px"><span class="in"><span class="m">2020<span class="s">/</span>7<span class="s">/</span>1</span></span></div>
<div class="cell" style="left:476px;top:456px;width:113px;height:32px;line-height:34px"><span class="in"><span class="m"><span class="hh">H</span>10107</span></span></div>
<div class="cell" style="left:590px;top:456px;width:94px;height:32px;line-height:34px"><span class="in"><span class="m">3</span></span></div>
<div class="cell" style="left:685px;top:456px;width:107px;height:32px;line-height:34px"><span class="in"><span class="m">2023<span class="s">/</span>7<span class="s">/</span>1</span></span></div>
<div class="abs" style="left:29px;top:489px;width:874px;height:33px;background:#f8f8f8"></div>
<div class="abs" style="left:29px;top:521px;width:875px;height:1px;background:#dedede"></div>
<div class="cell" style="left:29px;top:489px;width:46px;height:32px;line-height:34px"><span class="in"><span class="m">8</span></span></div>
<div class="cell" style="left:76px;top:489px;width:90px;height:32px;line-height:34px"><span class="in">帮帮<span class="m">8</span></span></div>
<div class="cell" style="left:167px;top:489px;width:97px;height:32px;line-height:34px"><span class="in"><span class="m">2020<span class="s">/</span>4<span class="s">/</span>1</span></span></div>
<div class="cell" style="left:265px;top:489px;width:102px;height:32px;line-height:34px"><span class="in">信息部</span></div>
<div class="cell" style="left:368px;top:489px;width:107px;height:32px;line-height:34px"><span class="in"><span class="m">2020<span class="s">/</span>4<span class="s">/</span>1</span></span></div>
<div class="cell" style="left:476px;top:489px;width:113px;height:32px;line-height:34px"><span class="in"><span class="m"><span class="hh">H</span>10108</span></span></div>
<div class="cell" style="left:590px;top:489px;width:94px;height:32px;line-height:34px"><span class="in"><span class="m">2</span></span></div>
<div class="cell" style="left:685px;top:489px;width:107px;height:32px;line-height:34px"><span class="in"><span class="m">2022<span class="s">/</span>4<span class="s">/</span>1</span></span></div>
<div class="abs" style="left:29px;top:522px;width:874px;height:33px;background:#fff"></div>
<div class="abs" style="left:29px;top:554px;width:875px;height:1px;background:#dedede"></div>
<div class="cell" style="left:29px;top:522px;width:46px;height:32px;line-height:34px"><span class="in"><span class="m">9</span></span></div>
<div class="cell" style="left:76px;top:522px;width:90px;height:32px;line-height:34px"><span class="in">帮帮<span class="m">9</span></span></div>
<div class="cell" style="left:167px;top:522px;width:97px;height:32px;line-height:34px"><span class="in"><span class="m">2021<span class="s">/</span>5<span class="s">/</span>1</span></span></div>
<div class="cell" style="left:265px;top:522px;width:102px;height:32px;line-height:34px"><span class="in">人事部</span></div>
<div class="cell" style="left:368px;top:522px;width:107px;height:32px;line-height:34px"><span class="in"><span class="m">2021<span class="s">/</span>5<span class="s">/</span>1</span></span></div>
<div class="cell" style="left:476px;top:522px;width:113px;height:32px;line-height:34px"><span class="in"><span class="m"><span class="hh">H</span>10109</span></span></div>
<div class="cell" style="left:590px;top:522px;width:94px;height:32px;line-height:34px"><span class="in"><span class="m">1</span></span></div>
<div class="cell" style="left:685px;top:522px;width:107px;height:32px;line-height:34px"><span class="in"><span class="m">2022<span class="s">/</span>5<span class="s">/</span>1</span></span></div>
<div class="abs" style="left:29px;top:555px;width:874px;height:33px;background:#f8f8f8"></div>
<div class="abs" style="left:29px;top:587px;width:875px;height:1px;background:#dedede"></div>
<div class="cell" style="left:29px;top:555px;width:46px;height:32px;line-height:34px"><span class="in"><span class="m">10</span></span></div>
<div class="cell" style="left:76px;top:555px;width:90px;height:32px;line-height:34px"><span class="in">帮帮<span class="m">10</span></span></div>
<div class="cell" style="left:167px;top:555px;width:97px;height:32px;line-height:34px"><span class="in"><span class="m">2019<span class="s">/</span>4<span class="s">/</span>1</span></span></div>
<div class="cell" style="left:265px;top:555px;width:102px;height:32px;line-height:34px"><span class="in">财务部</span></div>
<div class="cell" style="left:368px;top:555px;width:107px;height:32px;line-height:34px"><span class="in"><span class="m">2019<span class="s">/</span>4<span class="s">/</span>1</span></span></div>
<div class="cell" style="left:476px;top:555px;width:113px;height:32px;line-height:34px"><span class="in"><span class="m"><span class="hh">H</span>10110</span></span></div>
<div class="cell" style="left:590px;top:555px;width:94px;height:32px;line-height:34px"><span class="in"><span class="m">1</span></span></div>
<div class="cell" style="left:685px;top:555px;width:107px;height:32px;line-height:34px"><span class="in"><span class="m">2020<span class="s">/</span>4<span class="s">/</span>1</span></span></div>
<div class="abs" style="left:29px;top:588px;width:874px;height:33px;background:#fff"></div>
<div class="abs" style="left:29px;top:620px;width:875px;height:1px;background:#dedede"></div>
<div class="cell" style="left:29px;top:588px;width:46px;height:32px;line-height:34px"><span class="in"><span class="m">11</span></span></div>
<div class="cell" style="left:76px;top:588px;width:90px;height:32px;line-height:34px"><span class="in">帮帮<span class="m">11</span></span></div>
<div class="cell" style="left:167px;top:588px;width:97px;height:32px;line-height:34px"><span class="in"><span class="m">2018<span class="s">/</span>5<span class="s">/</span>1</span></span></div>
<div class="cell" style="left:265px;top:588px;width:102px;height:32px;line-height:34px"><span class="in">市场部</span></div>
<div class="cell" style="left:368px;top:588px;width:107px;height:32px;line-height:34px"><span class="in"><span class="m">2018<span class="s">/</span>5<span class="s">/</span>1</span></span></div>
<div class="cell" style="left:476px;top:588px;width:113px;height:32px;line-height:34px"><span class="in"><span class="m"><span class="hh">H</span>10111</span></span></div>
<div class="cell" style="left:590px;top:588px;width:94px;height:32px;line-height:34px"><span class="in"><span class="m">3</span></span></div>
<div class="cell" style="left:685px;top:588px;width:107px;height:32px;line-height:34px"><span class="in"><span class="m">2021<span class="s">/</span>5<span class="s">/</span>1</span></span></div>
<div class="abs" style="left:29px;top:621px;width:874px;height:33px;background:#f8f8f8"></div>
<div class="abs" style="left:29px;top:653px;width:875px;height:1px;background:#dedede"></div>
<div class="cell" style="left:29px;top:621px;width:46px;height:32px;line-height:34px"><span class="in"><span class="m">12</span></span></div>
<div class="cell" style="left:76px;top:621px;width:90px;height:32px;line-height:34px"><span class="in">帮帮<span class="m">12</span></span></div>
<div class="cell" style="left:167px;top:621px;width:97px;height:32px;line-height:34px"><span class="in"><span class="m">2022<span class="s">/</span>6<span class="s">/</span>1</span></span></div>
<div class="cell" style="left:265px;top:621px;width:102px;height:32px;line-height:34px"><span class="in">策划部</span></div>
<div class="cell" style="left:368px;top:621px;width:107px;height:32px;line-height:34px"><span class="in"><span class="m">2022<span class="s">/</span>6<span class="s">/</span>1</span></span></div>
<div class="cell" style="left:476px;top:621px;width:113px;height:32px;line-height:34px"><span class="in"><span class="m"><span class="hh">H</span>10112</span></span></div>
<div class="cell" style="left:590px;top:621px;width:94px;height:32px;line-height:34px"><span class="in"><span class="m">3</span></span></div>
<div class="cell" style="left:685px;top:621px;width:107px;height:32px;line-height:34px"><span class="in"><span class="m">2025<span class="s">/</span>6<span class="s">/</span>1</span></span></div>
<div class="abs" style="left:29px;top:654px;width:874px;height:33px;background:#fff"></div>
<div class="abs" style="left:29px;top:686px;width:875px;height:1px;background:#dedede"></div>
<div class="cell" style="left:29px;top:654px;width:46px;height:32px;line-height:34px"><span class="in"><span class="m">13</span></span></div>
<div class="cell" style="left:76px;top:654px;width:90px;height:32px;line-height:34px"><span class="in">帮帮<span class="m">13</span></span></div>
<div class="cell" style="left:167px;top:654px;width:97px;height:32px;line-height:34px"><span class="in"><span class="m">2022<span class="s">/</span>1<span class="s">/</span>1</span></span></div>
<div class="cell" style="left:265px;top:654px;width:102px;height:32px;line-height:34px"><span class="in">行政部</span></div>
<div class="cell" style="left:368px;top:654px;width:107px;height:32px;line-height:34px"><span class="in"><span class="m">2022<span class="s">/</span>1<span class="s">/</span>1</span></span></div>
<div class="cell" style="left:476px;top:654px;width:113px;height:32px;line-height:34px"><span class="in"><span class="m"><span class="hh">H</span>10113</span></span></div>
<div class="cell" style="left:590px;top:654px;width:94px;height:32px;line-height:34px"><span class="in"><span class="m">1</span></span></div>
<div class="cell" style="left:685px;top:654px;width:107px;height:32px;line-height:34px"><span class="in"><span class="m">2023<span class="s">/</span>1<span class="s">/</span>1</span></span></div>
<div class="abs" style="left:29px;top:687px;width:874px;height:33px;background:#f8f8f8"></div>
<div class="abs" style="left:29px;top:719px;width:875px;height:1px;background:#dedede"></div>
<div class="cell" style="left:29px;top:687px;width:46px;height:32px;line-height:34px"><span class="in"><span class="m">14</span></span></div>
<div class="cell" style="left:76px;top:687px;width:90px;height:32px;line-height:34px"><span class="in">帮帮<span class="m">14</span></span></div>
<div class="cell" style="left:167px;top:687px;width:97px;height:32px;line-height:34px"><span class="in"><span class="m">2022<span class="s">/</span>2<span class="s">/</span>1</span></span></div>
<div class="cell" style="left:265px;top:687px;width:102px;height:32px;line-height:34px"><span class="in">策划部</span></div>
<div class="cell" style="left:368px;top:687px;width:107px;height:32px;line-height:34px"><span class="in"><span class="m">2022<span class="s">/</span>2<span class="s">/</span>1</span></span></div>
<div class="cell" style="left:476px;top:687px;width:113px;height:32px;line-height:34px"><span class="in"><span class="m"><span class="hh">H</span>10114</span></span></div>
<div class="cell" style="left:590px;top:687px;width:94px;height:32px;line-height:34px"><span class="in"><span class="m">2</span></span></div>
<div class="cell" style="left:685px;top:687px;width:107px;height:32px;line-height:34px"><span class="in"><span class="m">2024<span class="s">/</span>2<span class="s">/</span>1</span></span></div>
<div class="abs" style="left:29px;top:720px;width:874px;height:33px;background:#fff"></div>
<div class="abs" style="left:29px;top:752px;width:875px;height:1px;background:#dedede"></div>
<div class="cell" style="left:29px;top:720px;width:46px;height:32px;line-height:34px"><span class="in"><span class="m">15</span></span></div>
<div class="cell" style="left:76px;top:720px;width:90px;height:32px;line-height:34px"><span class="in">帮帮<span class="m">15</span></span></div>
<div class="cell" style="left:167px;top:720px;width:97px;height:32px;line-height:34px"><span class="in"><span class="m">2022<span class="s">/</span>3<span class="s">/</span>1</span></span></div>
<div class="cell" style="left:265px;top:720px;width:102px;height:32px;line-height:34px"><span class="in">行政部</span></div>
<div class="cell" style="left:368px;top:720px;width:107px;height:32px;line-height:34px"><span class="in"><span class="m">2022<span class="s">/</span>3<span class="s">/</span>1</span></span></div>
<div class="cell" style="left:476px;top:720px;width:113px;height:32px;line-height:34px"><span class="in"><span class="m"><span class="hh">H</span>10115</span></span></div>
<div class="cell" style="left:590px;top:720px;width:94px;height:32px;line-height:34px"><span class="in"><span class="m">1</span></span></div>
<div class="cell" style="left:685px;top:720px;width:107px;height:32px;line-height:34px"><span class="in"><span class="m">2023<span class="s">/</span>3<span class="s">/</span>1</span></span></div>
<div class="abs" style="left:29px;top:753px;width:874px;height:33px;background:#f8f8f8"></div>
<div class="abs" style="left:29px;top:785px;width:875px;height:1px;background:#dedede"></div>
<div class="cell" style="left:29px;top:753px;width:46px;height:32px;line-height:34px"><span class="in"><span class="m">16</span></span></div>
<div class="cell" style="left:76px;top:753px;width:90px;height:32px;line-height:34px"><span class="in">帮帮<span class="m">16</span></span></div>
<div class="cell" style="left:167px;top:753px;width:97px;height:32px;line-height:34px"><span class="in"><span class="m">2022<span class="s">/</span>4<span class="s">/</span>1</span></span></div>
<div class="cell" style="left:265px;top:753px;width:102px;height:32px;line-height:34px"><span class="in">信息部</span></div>
<div class="cell" style="left:368px;top:753px;width:107px;height:32px;line-height:34px"><span class="in"><span class="m">2022<span class="s">/</span>4<span class="s">/</span>1</span></span></div>
<div class="cell" style="left:476px;top:753px;width:113px;height:32px;line-height:34px"><span class="in"><span class="m"><span class="hh">H</span>10116</span></span></div>
<div class="cell" style="left:590px;top:753px;width:94px;height:32px;line-height:34px"><span class="in"><span class="m">1</span></span></div>
<div class="cell" style="left:685px;top:753px;width:107px;height:32px;line-height:34px"><span class="in"><span class="m">2023<span class="s">/</span>4<span class="s">/</span>1</span></span></div>
<div class="abs" style="left:75px;top:258px;width:1px;height:528px;background:#dedede"></div>
<div class="abs" style="left:166px;top:258px;width:1px;height:528px;background:#dedede"></div>
<div class="abs" style="left:264px;top:258px;width:1px;height:528px;background:#dedede"></div>
<div class="abs" style="left:367px;top:258px;width:1px;height:528px;background:#dedede"></div>
<div class="abs" style="left:475px;top:258px;width:1px;height:528px;background:#dedede"></div>
<div class="abs" style="left:589px;top:258px;width:1px;height:528px;background:#dedede"></div>
<div class="abs" style="left:684px;top:258px;width:1px;height:528px;background:#dedede"></div>
<div class="abs" style="left:792px;top:258px;width:1px;height:528px;background:#dedede"></div>
<div class="abs" style="left:903px;top:258px;width:1px;height:528px;background:#dedede"></div>
<div class="abs" style="left:963px;top:225px;width:77px;height:231px;border:1px solid #000;border-top:none;background:#fff"></div>
<div class="cell" style="left:964px;top:225px;width:75px;height:32px;line-height:34px;font-size:16px;"><span class="in">员工姓名</span></div>
<div class="cell" style="left:964px;top:258px;width:75px;height:32px;line-height:34px;"><span class="in">帮帮<span class="m">11</span></span></div>
<div class="abs" style="left:963px;top:257px;width:77px;height:1px;background:#000"></div>
<div class="cell" style="left:964px;top:291px;width:75px;height:32px;line-height:34px;"><span class="in">帮帮<span class="m">2</span></span></div>
<div class="abs" style="left:963px;top:290px;width:77px;height:1px;background:#000"></div>
<div class="cell" style="left:964px;top:324px;width:75px;height:32px;line-height:34px;"><span class="in">帮帮<span class="m">5</span></span></div>
<div class="abs" style="left:963px;top:323px;width:77px;height:1px;background:#000"></div>
<div class="cell" style="left:964px;top:357px;width:75px;height:32px;line-height:34px;"><span class="in">帮帮<span class="m">13</span></span></div>
<div class="abs" style="left:963px;top:356px;width:77px;height:1px;background:#000"></div>
<div class="cell" style="left:964px;top:390px;width:75px;height:32px;line-height:34px;"><span class="in">帮帮<span class="m">7</span></span></div>
<div class="abs" style="left:963px;top:389px;width:77px;height:1px;background:#000"></div>
<div class="cell" style="left:964px;top:423px;width:75px;height:32px;line-height:34px;"><span class="in">帮帮<span class="m">10</span></span></div>
<div class="abs" style="left:963px;top:422px;width:77px;height:1px;background:#000"></div>
<svg class="abs" style="left:1038px;top:223px;overflow:visible" width="76" height="38"><rect x="1.5" y="1.5" width="71" height="33" fill="none" stroke="#217346" stroke-width="3"/><rect x="2" y="2" width="70" height="32" fill="none" stroke="#fff" stroke-width="2" stroke-dasharray="2 7" stroke-dashoffset="-5"/><rect x="69" y="31.5" width="6.5" height="6.5" fill="#fff"/><rect x="70" y="32.3" width="5" height="5" fill="#217346"/><rect x="71.4" y="33.7" width="2.2" height="2.2" fill="#fff"/></svg>
<div class="abs" style="left:75px;top:219px;width:722px;height:574px;border:3px solid #f63a3c"></div>
<div class="abs" style="left:956px;top:213px;width:91px;height:253px;border:3px solid #f63a3c"></div>
<svg class="abs" style="left:0;top:0;pointer-events:none" width="1409" height="821">
<polygon fill="#f9383a" points="399.1,67.9 417,73.2 415.3,76.2 456,114.5 410.6,82.2 407.2,84.8"/>
<polygon fill="#f9383a" points="762,135 781.1,139.3 778.3,142.7 803.6,166.7 773.5,148.2 771,151.5"/>
<polygon fill="#f9383a" points="1114.1,265.1 1132,269.1 1129.8,272.1 1182.7,316.6 1125.6,278 1123,280.4"/>
</svg>
<div class="abs dlg" style="left:941px;top:479px;width:228px;height:299px;background:#f0f0f0;border:1px solid #6f6f6f;box-shadow:0 5px 18px rgba(0,0,0,.34),0 1px 8px rgba(0,0,0,.18)">
<div class="abs" style="left:0;top:0;width:226px;height:30px;background:#fff"></div>
<div class="abs" style="left:8px;top:7px;line-height:16px;font-size:12px;color:#000">高级筛选</div>
<div class="abs" style="left:154px;top:6px;width:8px;line-height:16px;font-size:12px;color:#000;text-align:center">?</div>
<svg class="abs" style="left:197px;top:9px" width="12" height="12"><path d="M1 1L11 11M11 1L1 11" stroke="#000" stroke-width="1.1" fill="none"/></svg>
<div class="abs" style="left:6px;top:40px;line-height:16px">方式</div>
<div class="abs" style="left:35px;top:47px;width:185px;height:1px;background:#dcdcdc"></div>
<div class="abs" style="left:15px;top:69px;width:13px;height:13px;border:1px solid #333;border-radius:50%;background:#fff"></div>
<div class="abs" style="left:32px;top:68px;line-height:16px;white-space:nowrap">在原有区域显示筛选结果(<u>F</u>)</div>
<div class="abs" style="left:15px;top:94px;width:13px;height:13px;border:1px solid #333;border-radius:50%;background:#fff"></div>
<div class="abs" style="left:18px;top:97px;width:7px;height:7px;border-radius:50%;background:#333"></div>
<div class="abs" style="left:32px;top:93px;line-height:16px;white-space:nowrap">将筛选结果复制到其他位置(<u>O</u>)</div>
<div class="abs" style="left:6px;top:127px;line-height:16px;white-space:nowrap">列表区域(<u>L</u>):</div>
<div class="abs" style="left:82px;top:121px;width:138px;height:26px;background:#fff;border:1px solid #adadad"></div>
<div class="abs" style="left:87px;top:126px;line-height:16px;font-size:12px;white-space:nowrap">$B$1:$H$17</div>
<div class="abs" style="left:198px;top:122px;width:21px;height:24px;background:#cfcfcf"></div>
<div class="abs" style="left:201px;top:125px;width:15px;height:14px;background:#f3f3f3"></div>
<svg class="abs" style="left:203px;top:126px" width="11" height="12"><path d="M5.5 0.5L1.5 5H4.5V8.5H6.5V5H9.5Z" fill="#000"/><rect x="1" y="10" width="9" height="1.3" fill="#000"/></svg>
<div class="abs" style="left:6px;top:157px;line-height:16px;white-space:nowrap">条件区域(<u>C</u>):</div>
<div class="abs" style="left:82px;top:151px;width:138px;height:26px;background:#fff;border:1px solid #adadad"></div>
<div class="abs" style="left:87px;top:156px;line-height:16px;font-size:12px;white-space:nowrap">$K$1:$K$7</div>
<div class="abs" style="left:198px;top:152px;width:21px;height:24px;background:#cfcfcf"></div>
<div class="abs" style="left:201px;top:155px;width:15px;height:14px;background:#f3f3f3"></div>
<svg class="abs" style="left:203px;top:156px" width="11" height="12"><path d="M5.5 0.5L1.5 5H4.5V8.5H6.5V5H9.5Z" fill="#000"/><rect x="1" y="10" width="9" height="1.3" fill="#000"/></svg>
<div class="abs" style="left:6px;top:187px;line-height:16px;white-space:nowrap">复制到(<u>T</u>):</div>
<div class="abs" style="left:82px;top:181px;width:138px;height:26px;background:#fff;border:1px solid #adadad"></div>
<div class="abs" style="left:87px;top:186px;line-height:16px;font-size:12px;white-space:nowrap">Sheet1!$L$1</div>
<div class="abs" style="left:198px;top:182px;width:21px;height:24px;background:#cfcfcf"></div>
<div class="abs" style="left:201px;top:185px;width:15px;height:14px;background:#f3f3f3"></div>
<svg class="abs" style="left:203px;top:186px" width="11" height="12"><path d="M5.5 0.5L1.5 5H4.5V8.5H6.5V5H9.5Z" fill="#000"/><rect x="1" y="10" width="9" height="1.3" fill="#000"/></svg>
<div class="abs" style="left:6px;top:226px;width:13px;height:13px;border:1px solid #333;background:#fff"></div>
<div class="abs" style="left:23px;top:225px;line-height:16px;white-space:nowrap">选择不重复的记录(<u>R</u>)</div>
<div class="abs" style="left:61px;top:258px;width:74px;height:29px;background:#e1e1e1;border:2px solid #0078d7;text-align:center;line-height:28px">确定</div>
<div class="abs" style="left:145px;top:258px;width:74px;height:29px;background:#e1e1e1;border:1px solid #adadad;text-align:center;line-height:30px">取消</div>
</div>
</div></body></html>
